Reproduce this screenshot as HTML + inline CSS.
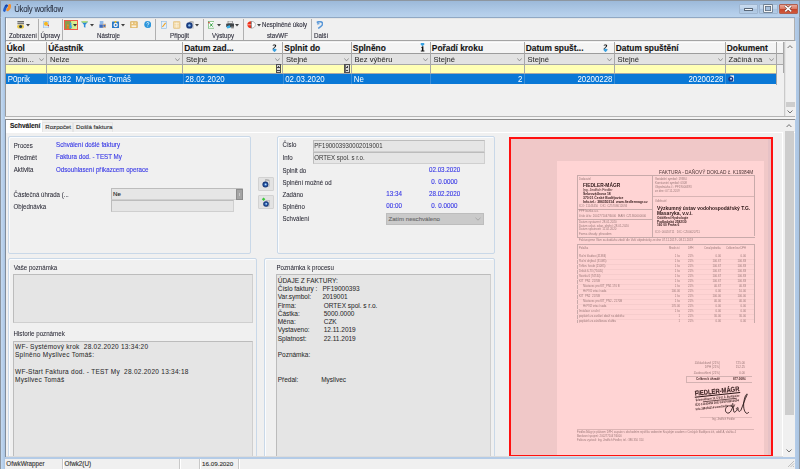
<!DOCTYPE html>
<html><head><meta charset="utf-8">
<style>
*{box-sizing:border-box;margin:0;padding:0}
html,body{width:800px;height:469px;overflow:hidden;background:#f0f0f0;font-family:"Liberation Sans",sans-serif;color:#222}
.a{position:absolute}
.t{position:absolute;white-space:pre;line-height:1;-webkit-text-stroke:0.12px currentColor}
</style></head><body>
<div class="a" style="left:0px;top:0px;width:800px;height:469px;background:#b9d1ea"></div>
<div class="a" style="left:0px;top:1px;width:800px;height:16.5px;background:linear-gradient(#9cb9d9,#b3cdea 70%,#bad3ec)"></div>
<div class="a" style="left:0px;top:17px;width:800px;height:1px;background:#94aac4"></div>
<div class="a" style="left:0px;top:0px;width:800px;height:1px;background:#8d96a0"></div>
<div class="a" style="left:0px;top:0px;width:1px;height:469px;background:#8d96a0"></div>
<div class="a" style="left:799px;top:0px;width:1px;height:469px;background:#8d96a0"></div>
<svg class="a" style="left:0px;top:0px" width="14" height="14" viewBox="0 0 14 14"><path d="M6.4 5.8 C5.6 7 4.8 8.6 4.4 10.6" stroke="#1f5cc8" stroke-width="2.6" stroke-linecap="round" fill="none"/><path d="M5.6 6 C6.2 5.4 6.8 5.2 7.2 5.6" stroke="#1a44a8" stroke-width="1.6" stroke-linecap="round" fill="none"/><path d="M9.6 5.4 C9.8 7.4 8.8 9 7.6 9.8" stroke="#f4902c" stroke-width="2.8" stroke-linecap="round" fill="none"/></svg>
<div class="t" style="left:14.2px;top:6.20px;font-size:7.8px;color:#283040;letter-spacing:-0.24px;transform:scaleY(1.08);-webkit-text-stroke:0.05px currentColor">Úkoly workflow</div>
<div class="a" style="left:739.2px;top:3.6px;width:18.8px;height:10.8px;border:0.8px solid #9fb6d0;border-radius:1px;background:linear-gradient(#c9dbef,#bcd2ea 50%,#a9c3e0 52%,#b4cce6)"></div>
<div class="a" style="left:744.4px;top:8.4px;width:8.4px;height:2.8px;background:#f8f8f8;border:0.7px solid #5a6878;border-radius:0.6px"></div>
<div class="a" style="left:759.2px;top:3.6px;width:18.8px;height:10.8px;border:0.8px solid #9fb6d0;border-radius:1px;background:linear-gradient(#c9dbef,#bcd2ea 50%,#a9c3e0 52%,#b4cce6)"></div>
<div class="a" style="left:764.4px;top:5.2px;width:8px;height:7.2px;border:1.4px solid #f4f4f4;box-shadow:0 0 0 0.7px #5a6878, inset 0 0 0 0.7px #5a6878;background:#a8c0dc"></div>
<div class="a" style="left:779.2px;top:3.6px;width:18.8px;height:10.8px;border:0.8px solid #b06050;border-radius:1px;background:linear-gradient(#eaa898,#dc7a64 48%,#c84428 52%,#d0583c)"></div>
<svg class="a" style="left:784px;top:5.2px" width="8.4" height="7.2" viewBox="0 0 8.4 7.2"><path d="M1.2 0.9 L7.2 6.3 M7.2 0.9 L1.2 6.3" stroke="#5a2a22" stroke-width="2.6"/><path d="M1.2 0.9 L7.2 6.3 M7.2 0.9 L1.2 6.3" stroke="#fafafa" stroke-width="1.7"/></svg>
<div class="a" style="left:5px;top:18px;width:790px;height:451px;background:#f0f0f0"></div>
<div class="a" style="left:0px;top:16.8px;width:800px;height:1.3px;background:#90a8c4"></div>
<div class="a" style="left:1px;top:17px;width:4px;height:452px;background:linear-gradient(90deg,#c4daf2,#a9c4e2)"></div>
<div class="a" style="left:795px;top:17px;width:4px;height:452px;background:linear-gradient(90deg,#b4cce8,#a9c4e2)"></div>
<div class="a" style="left:5px;top:17px;width:1px;height:441px;background:#808c9a"></div>
<div class="a" style="left:6px;top:18px;width:789px;height:22px;background:#f0f0f0;border-top:1px solid #e6e6e6;border-left:1px solid #fafafa"></div>
<div class="a" style="left:6px;top:40px;width:789px;height:1.7px;background:#a4a4a4"></div>
<div class="a" style="left:794.2px;top:17.5px;width:0.8px;height:22px;background:#b0b0b0"></div>
<div class="a" style="left:38px;top:19px;width:1px;height:21px;background:#b0b0b0"></div>
<div class="a" style="left:62px;top:19px;width:1px;height:21px;background:#b0b0b0"></div>
<div class="a" style="left:155px;top:19px;width:1px;height:21px;background:#b0b0b0"></div>
<div class="a" style="left:203px;top:19px;width:1px;height:21px;background:#b0b0b0"></div>
<div class="a" style="left:242.5px;top:19px;width:1px;height:21px;background:#b0b0b0"></div>
<div class="a" style="left:311px;top:19px;width:1px;height:21px;background:#b0b0b0"></div>
<div class="t" style="left:9px;top:32.60px;font-size:6.2px;color:#30303e;transform:scaleY(1.18)">Zobrazení</div>
<div class="t" style="left:40.5px;top:32.60px;font-size:6.2px;color:#30303e;transform:scaleY(1.18)">Úpravy</div>
<div class="t" style="left:97px;top:32.60px;font-size:6.2px;color:#30303e;transform:scaleY(1.18)">Nástroje</div>
<div class="t" style="left:170px;top:32.60px;font-size:6.2px;color:#30303e;transform:scaleY(1.18)">Připojit</div>
<div class="t" style="left:212px;top:32.60px;font-size:6.2px;color:#30303e;transform:scaleY(1.18)">Výstupy</div>
<div class="t" style="left:267px;top:32.60px;font-size:6.2px;color:#30303e;transform:scaleY(1.18)">stavWF</div>
<div class="t" style="left:314px;top:32.60px;font-size:6.2px;color:#30303e;transform:scaleY(1.18)">Další</div>
<div class="t" style="left:262px;top:22.35px;font-size:6.1px;color:#30303e;transform:scaleY(1.18)">Nesplněné úkoly</div>
<svg class="a" style="left:16.5px;top:20.8px" width="7.5" height="8" viewBox="0 0 7.5 8"><rect x="0.4" y="0" width="6.8" height="1.4" fill="#6a6a6a"/><rect x="0.4" y="1.9" width="6.8" height="1.4" fill="#7a7a7a"/><ellipse cx="3.6" cy="5.6" rx="3.6" ry="2.2" fill="#e8c84a"/><circle cx="3.6" cy="5.6" r="1.5" fill="#1f3a4a"/></svg>
<svg class="a" style="left:26px;top:24.3px" width="4" height="2.5" viewBox="0 0 4 2.5"><path d="M0 0 H4 L2 2.5Z" fill="#404040"/></svg>
<svg class="a" style="left:43px;top:21px" width="6.2" height="7.4" viewBox="0 0 6.2 7.4"><rect x="0.3" y="0.3" width="5.6" height="6.8" rx="0.6" fill="#d6e8f8" stroke="#7aaad8" stroke-width="0.6"/><circle cx="3" cy="2.8" r="2" fill="#f6b820"/><path d="M4 4 L5.9 3.8 L5.9 5.5Z" fill="#e04020"/></svg>
<div class="a" style="left:63.9px;top:20.2px;width:14px;height:9.7px;border:1px solid #f05848;background:linear-gradient(90deg,#8c9a4c 0,#8c9a4c 50%,#cfe884 51%,#dcf29a)"></div>
<svg class="a" style="left:65.5px;top:21.5px" width="7" height="7" viewBox="0 0 7 7"><circle cx="1.8" cy="3.2" r="1" fill="#e88a2a"/><path d="M0.6 6.8 L1 4.2 L2.6 4.2 L3 6.8Z" fill="#e87a1a"/><circle cx="4.6" cy="1.4" r="0.9" fill="#3aa0e8"/><path d="M3.4 6.2 L3.9 2.6 L5.4 2.6 L5.9 6.2Z" fill="#3aa0e8"/></svg>
<svg class="a" style="left:73.2px;top:24.2px" width="4" height="2.5" viewBox="0 0 4 2.5"><path d="M0 0 H4 L2 2.5Z" fill="#303030"/></svg>
<svg class="a" style="left:81px;top:21.4px" width="7.3" height="7" viewBox="0 0 7.3 7"><path d="M0.2 0.6 H7.1 L4.4 3.8 V6.8 L2.9 6 V3.8Z" fill="#2a8ad8"/><ellipse cx="3.65" cy="0.9" rx="3.4" ry="0.8" fill="#b8e070"/></svg>
<svg class="a" style="left:89.8px;top:24.3px" width="4" height="2.5" viewBox="0 0 4 2.5"><path d="M0 0 H4 L2 2.5Z" fill="#404040"/></svg>
<svg class="a" style="left:98.6px;top:21.4px" width="7.5" height="7" viewBox="0 0 7.5 7"><rect x="0.8" y="0" width="3.6" height="3" fill="#8fb8e8"/><path d="M0.4 3.4 H4.6 V6.8 H0.4Z" fill="#3c6cc0"/><rect x="3.8" y="2.8" width="3.6" height="4" fill="#d8b48a"/><circle cx="5.4" cy="4.8" r="1.1" fill="#3c6cc0"/></svg>
<svg class="a" style="left:112px;top:21px" width="7.3" height="7.3" viewBox="0 0 7.3 7.3"><rect x="0" y="0.6" width="7.3" height="6.7" rx="0.6" fill="#2a7ac8"/><circle cx="3.65" cy="4" r="2.2" fill="#f4f4f4"/><circle cx="3.65" cy="4" r="0.9" fill="#2a7ac8"/><path d="M2.4 0 L4.6 0 L4.2 1.8 L2.8 1.8Z" fill="#f4c020"/></svg>
<svg class="a" style="left:120.8px;top:24.3px" width="4" height="2.5" viewBox="0 0 4 2.5"><path d="M0 0 H4 L2 2.5Z" fill="#404040"/></svg>
<svg class="a" style="left:129.9px;top:20.8px" width="7.8" height="7.4" viewBox="0 0 7.8 7.4"><rect x="0.4" y="0.4" width="7" height="6.6" rx="0.8" fill="#e8c278" stroke="#d4a850" stroke-width="0.6"/><rect x="1.6" y="1.6" width="1.4" height="1.2" fill="#fff"/><rect x="4.6" y="1.6" width="1.4" height="1.2" fill="#f6e2b8"/><rect x="1.6" y="4.4" width="4.6" height="1.8" fill="#fbf0dc"/></svg>
<svg class="a" style="left:143.6px;top:21.4px" width="7.5" height="7.2" viewBox="0 0 7.5 7.2"><circle cx="3.75" cy="3.6" r="3.5" fill="#2c96dc"/><path d="M2.6 2.4 C2.8 1.2 4.8 1.2 4.8 2.4 C4.8 3.2 3.8 3.4 3.8 4.4" stroke="#fff" stroke-width="0.8" fill="none"/><circle cx="3.8" cy="5.6" r="0.45" fill="#fff"/></svg>
<svg class="a" style="left:161px;top:20.8px" width="5.8" height="7.8" viewBox="0 0 5.8 7.8"><rect x="0.3" y="0.3" width="5.2" height="7.2" fill="#e4f0fa" stroke="#8ab8e0" stroke-width="0.6"/><path d="M1.4 6 L4.6 1.8" stroke="#f0a020" stroke-width="1.1"/></svg>
<svg class="a" style="left:173.2px;top:20.8px" width="7.4" height="7.8" viewBox="0 0 7.4 7.8"><rect x="0.4" y="0.4" width="6.6" height="7" rx="0.8" fill="#f0d8a4" stroke="#e0b870" stroke-width="0.6"/><path d="M1.4 2.5 H6 M1.4 4.2 H6 M1.4 5.8 H6 M3.7 1.4 V6.8" stroke="#fff5e2" stroke-width="0.6"/></svg>
<svg class="a" style="left:186px;top:21px" width="8" height="7.6" viewBox="0 0 8 7.6"><rect x="3.2" y="0.8" width="4.6" height="6.8" fill="#c8c8c8"/><path d="M3.6 0.2 L7.6 1" stroke="#888" stroke-width="0.6"/><circle cx="3.4" cy="4.4" r="3.2" fill="#1a3c80"/><circle cx="3.4" cy="4.4" r="1.2" fill="#8cc0f0"/></svg>
<svg class="a" style="left:195.4px;top:24.3px" width="4" height="2.5" viewBox="0 0 4 2.5"><path d="M0 0 H4 L2 2.5Z" fill="#404040"/></svg>
<svg class="a" style="left:207.7px;top:21px" width="6.5" height="7.5" viewBox="0 0 6.5 7.5"><rect x="0.3" y="0.3" width="5.9" height="6.9" fill="#fff" stroke="#5cb060" stroke-width="0.7"/><path d="M2 2.4 L4.6 5.6 M4.6 2.4 L2 5.6" stroke="#2a9a3a" stroke-width="1"/><rect x="0.2" y="1.2" width="1.6" height="1" fill="#e02828"/></svg>
<svg class="a" style="left:216.9px;top:24.3px" width="4" height="2.5" viewBox="0 0 4 2.5"><path d="M0 0 H4 L2 2.5Z" fill="#404040"/></svg>
<svg class="a" style="left:225.7px;top:21px" width="8.3" height="7.5" viewBox="0 0 8.3 7.5"><rect x="2" y="0" width="4.5" height="2.5" fill="#e8e8e8" stroke="#555" stroke-width="0.5"/><rect x="0.2" y="2.4" width="8" height="3.8" rx="0.8" fill="#404448"/><path d="M0.6 5.6 L3.6 4 L4.6 6.8 L1.2 7.4Z" fill="#3ab0e8"/><rect x="5.2" y="5.4" width="2.6" height="2" fill="#888"/></svg>
<svg class="a" style="left:235px;top:24.3px" width="4" height="2.5" viewBox="0 0 4 2.5"><path d="M0 0 H4 L2 2.5Z" fill="#404040"/></svg>
<svg class="a" style="left:247.1px;top:21px" width="8.7" height="7.5" viewBox="0 0 8.7 7.5"><path d="M4.2 0.3 C1.8 0.3 0.3 1.8 0.3 3.75 C0.3 5.7 1.8 7.2 4.2 7.2Z" fill="#f03018"/><path d="M4.4 0.3 C6.8 0.3 8.4 1.8 8.4 3.75 C8.4 5.7 6.8 7.2 4.4 7.2Z" fill="#fff" stroke="#777" stroke-width="0.5"/><path d="M0.3 3.75 H8.4" stroke="#fff" stroke-width="0.6"/><path d="M4.3 0.3 V7.2" stroke="#555" stroke-width="0.5"/></svg>
<svg class="a" style="left:256.9px;top:24.3px" width="4" height="2.5" viewBox="0 0 4 2.5"><path d="M0 0 H4 L2 2.5Z" fill="#404040"/></svg>
<svg class="a" style="left:315.9px;top:21px" width="7.2" height="7.7" viewBox="0 0 7.2 7.7"><path d="M0.8 1.6 C3 0 6.4 0.4 6.6 2.6 C6.8 4.6 4.4 6.2 2.2 7.4" stroke="#5a98d8" stroke-width="1.6" fill="none"/><path d="M1 3 L3.4 2.6" stroke="#5a98d8" stroke-width="1.2"/></svg>
<div class="a" style="left:5.5px;top:41px;width:789.5px;height:78px;background:#f0f0f0"></div>
<div class="a" style="left:5.5px;top:41.7px;width:778px;height:11.6px;background:#f4f4f4;border-top:1px solid #fcfcfc"></div>
<div class="a" style="left:5.5px;top:53px;width:778px;height:1.5px;background:#9c9c9c"></div>
<div class="a" style="left:5.5px;top:54.3px;width:778px;height:10px;background:#e2e2e2"></div>
<div class="a" style="left:5.5px;top:63.6px;width:778px;height:1px;background:#a8a8a8"></div>
<div class="a" style="left:5.5px;top:64.6px;width:771px;height:9px;background:#ffffb4"></div>
<div class="a" style="left:776.5px;top:64.6px;width:7px;height:9px;background:#f0f0f0"></div>
<div class="a" style="left:5.5px;top:73.6px;width:771px;height:10.8px;background:#0a78d6"></div>
<div class="t" style="left:6.8px;top:44.10px;font-size:8.4px;font-weight:bold;color:#141414">Úkol</div>
<div class="t" style="left:8.5px;top:55.60px;font-size:7.6px;color:#2e2e2e;-webkit-text-stroke:0.05px currentColor;transform:scaleY(1.06)">Začín...</div>
<svg class="a" style="left:39.2px;top:57.7px" width="5" height="3.4" viewBox="0 0 5 3.4"><path d="M0.3 0.4 L2.5 2.9 L4.7 0.4" stroke="#808080" stroke-width="0.8" fill="none"/></svg>
<div class="t" style="left:48.3px;top:44.10px;font-size:8.4px;font-weight:bold;color:#141414">Účastník</div>
<div class="t" style="left:50.0px;top:55.60px;font-size:7.6px;color:#2e2e2e;-webkit-text-stroke:0.05px currentColor;transform:scaleY(1.06)">Nelze</div>
<svg class="a" style="left:175.2px;top:57.7px" width="5" height="3.4" viewBox="0 0 5 3.4"><path d="M0.3 0.4 L2.5 2.9 L4.7 0.4" stroke="#808080" stroke-width="0.8" fill="none"/></svg>
<div class="t" style="left:184.3px;top:44.10px;font-size:8.4px;font-weight:bold;color:#141414">Datum zad...</div>
<div class="t" style="left:186.0px;top:55.60px;font-size:7.6px;color:#2e2e2e;-webkit-text-stroke:0.05px currentColor;transform:scaleY(1.06)">Stejné</div>
<svg class="a" style="left:275.2px;top:57.7px" width="5" height="3.4" viewBox="0 0 5 3.4"><path d="M0.3 0.4 L2.5 2.9 L4.7 0.4" stroke="#808080" stroke-width="0.8" fill="none"/></svg>
<div class="t" style="left:284.3px;top:44.10px;font-size:8.4px;font-weight:bold;color:#141414">Splnit do</div>
<div class="t" style="left:286.0px;top:55.60px;font-size:7.6px;color:#2e2e2e;-webkit-text-stroke:0.05px currentColor;transform:scaleY(1.06)">Stejné</div>
<svg class="a" style="left:343.7px;top:57.7px" width="5" height="3.4" viewBox="0 0 5 3.4"><path d="M0.3 0.4 L2.5 2.9 L4.7 0.4" stroke="#808080" stroke-width="0.8" fill="none"/></svg>
<div class="t" style="left:352.8px;top:44.10px;font-size:8.4px;font-weight:bold;color:#141414">Splněno</div>
<div class="t" style="left:354.5px;top:55.60px;font-size:7.6px;color:#2e2e2e;-webkit-text-stroke:0.05px currentColor;transform:scaleY(1.06)">Bez výběru</div>
<svg class="a" style="left:422.7px;top:57.7px" width="5" height="3.4" viewBox="0 0 5 3.4"><path d="M0.3 0.4 L2.5 2.9 L4.7 0.4" stroke="#808080" stroke-width="0.8" fill="none"/></svg>
<div class="t" style="left:431.8px;top:44.10px;font-size:8.4px;font-weight:bold;color:#141414">Pořadí kroku</div>
<div class="t" style="left:433.5px;top:55.60px;font-size:7.6px;color:#2e2e2e;-webkit-text-stroke:0.05px currentColor;transform:scaleY(1.06)">Stejné</div>
<svg class="a" style="left:516.7px;top:57.7px" width="5" height="3.4" viewBox="0 0 5 3.4"><path d="M0.3 0.4 L2.5 2.9 L4.7 0.4" stroke="#808080" stroke-width="0.8" fill="none"/></svg>
<div class="t" style="left:525.8px;top:44.10px;font-size:8.4px;font-weight:bold;color:#141414">Datum spušt...</div>
<div class="t" style="left:527.5px;top:55.60px;font-size:7.6px;color:#2e2e2e;-webkit-text-stroke:0.05px currentColor;transform:scaleY(1.06)">Stejné</div>
<svg class="a" style="left:606.7px;top:57.7px" width="5" height="3.4" viewBox="0 0 5 3.4"><path d="M0.3 0.4 L2.5 2.9 L4.7 0.4" stroke="#808080" stroke-width="0.8" fill="none"/></svg>
<div class="t" style="left:615.8px;top:44.10px;font-size:8.4px;font-weight:bold;color:#141414">Datum spuštění</div>
<div class="t" style="left:617.5px;top:55.60px;font-size:7.6px;color:#2e2e2e;-webkit-text-stroke:0.05px currentColor;transform:scaleY(1.06)">Stejné</div>
<svg class="a" style="left:717.7px;top:57.7px" width="5" height="3.4" viewBox="0 0 5 3.4"><path d="M0.3 0.4 L2.5 2.9 L4.7 0.4" stroke="#808080" stroke-width="0.8" fill="none"/></svg>
<div class="t" style="left:726.8px;top:44.10px;font-size:8.4px;font-weight:bold;color:#141414">Dokument</div>
<div class="t" style="left:728.5px;top:55.60px;font-size:7.6px;color:#2e2e2e;-webkit-text-stroke:0.05px currentColor;transform:scaleY(1.06)">Začíná na</div>
<svg class="a" style="left:768.7px;top:57.7px" width="5" height="3.4" viewBox="0 0 5 3.4"><path d="M0.3 0.4 L2.5 2.9 L4.7 0.4" stroke="#808080" stroke-width="0.8" fill="none"/></svg>
<div class="a" style="left:46px;top:41.7px;width:1px;height:31.5px;background:#a8a8a8"></div>
<div class="a" style="left:182px;top:41.7px;width:1px;height:31.5px;background:#a8a8a8"></div>
<div class="a" style="left:282px;top:41.7px;width:1px;height:31.5px;background:#a8a8a8"></div>
<div class="a" style="left:351px;top:41.7px;width:1px;height:31.5px;background:#a8a8a8"></div>
<div class="a" style="left:430px;top:41.7px;width:1px;height:31.5px;background:#a8a8a8"></div>
<div class="a" style="left:524px;top:41.7px;width:1px;height:31.5px;background:#a8a8a8"></div>
<div class="a" style="left:614px;top:41.7px;width:1px;height:31.5px;background:#a8a8a8"></div>
<div class="a" style="left:725px;top:41.7px;width:1px;height:31.5px;background:#a8a8a8"></div>
<div class="a" style="left:776px;top:41.7px;width:1px;height:31.5px;background:#a8a8a8"></div>
<div class="a" style="left:783px;top:41.7px;width:1px;height:31.5px;background:#a8a8a8"></div>
<div class="a" style="left:46.5px;top:73.6px;width:1px;height:10.8px;background:#3c8ed8"></div>
<div class="a" style="left:182.5px;top:73.6px;width:1px;height:10.8px;background:#3c8ed8"></div>
<div class="a" style="left:282.5px;top:73.6px;width:1px;height:10.8px;background:#3c8ed8"></div>
<div class="a" style="left:351.0px;top:73.6px;width:1px;height:10.8px;background:#3c8ed8"></div>
<div class="a" style="left:430.0px;top:73.6px;width:1px;height:10.8px;background:#3c8ed8"></div>
<div class="a" style="left:524.0px;top:73.6px;width:1px;height:10.8px;background:#3c8ed8"></div>
<div class="a" style="left:614.0px;top:73.6px;width:1px;height:10.8px;background:#3c8ed8"></div>
<div class="a" style="left:725.0px;top:73.6px;width:1px;height:10.8px;background:#3c8ed8"></div>
<div class="a" style="left:775.5px;top:41.5px;width:1px;height:43px;background:#a8a8a8"></div>
<div class="a" style="left:5px;top:41.7px;width:1px;height:75.2px;background:#9a9a9a"></div>
<svg class="a" style="left:419.8px;top:42.6px" width="5" height="9" viewBox="0 0 5 9"><path d="M2.5 3.2 L0.6 1.4 A1.4 1.4 0 0 1 4.4 1.4Z" fill="#38a0e0"/><path d="M1.2 4.2 L2.6 3.2 H3.4 V7.6 H4.4 V8.4 H0.8 V7.6 H1.9 V4.6 L1.2 5Z" fill="#111"/></svg>
<svg class="a" style="left:271.5px;top:43.6px" width="5" height="8.4" viewBox="0 0 5 8.4"><path d="M0.6 1.2 C1.2 0.2 4.2 0.1 4.2 1.8 C4.2 3 2.6 3.6 1.4 5 H4.4 V5.6 H0.6 V4.8 C1.6 3.6 3 2.8 3 1.8 C3 0.9 1.6 1 1 1.8Z" fill="#111"/><path d="M2.5 8.2 L0.6 6.2 A1.5 1.3 0 0 1 4.4 6.2Z" fill="#38a0e0"/></svg>
<svg class="a" style="left:602.7px;top:43.6px" width="5" height="8.4" viewBox="0 0 5 8.4"><path d="M0.6 1.2 C1.2 0.2 4.2 0.1 4.2 1.8 C4.2 3 2.6 3.6 1.4 5 H4.4 V5.6 H0.6 V4.8 C1.6 3.6 3 2.8 3 1.8 C3 0.9 1.6 1 1 1.8Z" fill="#111"/><path d="M2.5 8.2 L0.6 6.2 A1.5 1.3 0 0 1 4.4 6.2Z" fill="#38a0e0"/></svg>
<div class="a" style="left:275.8px;top:64.2px;width:5.6px;height:8.6px;background:#6e6e6e;border:0.6px solid #505050"></div>
<div class="a" style="left:277.0px;top:65.3px;width:3.2px;height:6.4px;background:#d8d8d8"></div>
<div class="a" style="left:277.40000000000003px;top:67px;width:2.4px;height:0.6px;background:#444"></div>
<div class="a" style="left:278.3px;top:66.1px;width:0.6px;height:2.4px;background:#444"></div>
<div class="a" style="left:277.40000000000003px;top:70.1px;width:2.4px;height:0.6px;background:#444"></div>
<div class="a" style="left:344.3px;top:64.2px;width:5.6px;height:8.6px;background:#6e6e6e;border:0.6px solid #505050"></div>
<div class="a" style="left:345.5px;top:65.3px;width:3.2px;height:6.4px;background:#d8d8d8"></div>
<div class="a" style="left:345.90000000000003px;top:67px;width:2.4px;height:0.6px;background:#444"></div>
<div class="a" style="left:346.8px;top:66.1px;width:0.6px;height:2.4px;background:#444"></div>
<div class="a" style="left:345.90000000000003px;top:70.1px;width:2.4px;height:0.6px;background:#444"></div>
<div class="a" style="left:5.5px;top:72.8px;width:771px;height:0.8px;background:#a8a8a8"></div>
<svg class="a" style="left:727.6px;top:75.3px" width="6.6" height="6.8" viewBox="0 0 6.6 6.8"><rect x="2.6" y="0.3" width="3.8" height="6" fill="#e8eef8" stroke="#9ab" stroke-width="0.4"/><circle cx="2.8" cy="4" r="2.6" fill="#1a3a8a"/><circle cx="3" cy="3.8" r="1" fill="#c8e0ff"/></svg>
<div class="t" style="left:7.7px;top:75.65px;font-size:7.9px;color:#fff;-webkit-text-stroke:0;transform:scaleY(1.06)">P0prik</div>
<div class="t" style="left:49.2px;top:75.65px;font-size:7.9px;color:#fff;-webkit-text-stroke:0;transform:scaleY(1.06)">99182  Myslivec Tomáš</div>
<div class="t" style="left:185.2px;top:75.65px;font-size:7.9px;color:#fff;-webkit-text-stroke:0;transform:scaleY(1.06)">28.02.2020</div>
<div class="t" style="left:285.2px;top:75.65px;font-size:7.9px;color:#fff;-webkit-text-stroke:0;transform:scaleY(1.06)">02.03.2020</div>
<div class="t" style="left:353.7px;top:75.65px;font-size:7.9px;color:#fff;-webkit-text-stroke:0;transform:scaleY(1.06)">Ne</div>
<div class="t" style="left:430.5px;width:92.0px;text-align:right;top:75.65px;font-size:7.9px;color:#fff;-webkit-text-stroke:0;transform:scaleY(1.06)">2</div>
<div class="t" style="left:524.5px;width:88.0px;text-align:right;top:75.65px;font-size:7.9px;color:#fff;-webkit-text-stroke:0;transform:scaleY(1.06)">20200228</div>
<div class="t" style="left:614.5px;width:109.0px;text-align:right;top:75.65px;font-size:7.9px;color:#fff;-webkit-text-stroke:0;transform:scaleY(1.06)">20200228</div>
<div class="a" style="left:784.5px;top:41px;width:11px;height:78px;background:#f0f0f0;border-left:1px solid #e6e6e6"></div>
<div class="a" style="left:785.5px;top:101.5px;width:9.5px;height:5px;background:#cdcdcd"></div>
<svg class="a" style="left:787px;top:44.8px" width="6" height="3.6" viewBox="0 0 6 3.6"><path d="M0.5 3.1 L3 0.6 L5.5 3.1" stroke="#606060" stroke-width="0.9" fill="none"/></svg>
<svg class="a" style="left:787px;top:110.4px" width="6" height="3.6" viewBox="0 0 6 3.6"><path d="M0.5 0.5 L3 3 L5.5 0.5" stroke="#606060" stroke-width="0.9" fill="none"/></svg>
<div class="a" style="left:784px;top:41.7px;width:1px;height:75px;background:#cacaca"></div>
<div class="a" style="left:5px;top:116px;width:790px;height:1px;background:#b4b4b4"></div>
<div class="a" style="left:5px;top:117px;width:790px;height:2px;background:#f4f4f4"></div>
<div class="a" style="left:5px;top:119px;width:790px;height:1px;background:#8c8c8c"></div>
<div class="a" style="left:6px;top:119.8px;width:789px;height:338px;background:#f0f0f0"></div>
<div class="a" style="left:6px;top:120px;width:36px;height:13px;background:#fff"></div>
<div class="a" style="left:42px;top:121.5px;width:30.5px;height:10.5px;background:#f0f0f0;border:1px solid #e4e4e4;border-bottom:none"></div>
<div class="a" style="left:72.5px;top:121.5px;width:40.5px;height:10.5px;background:#f0f0f0;border:1px solid #e4e4e4;border-bottom:none"></div>
<div class="t" style="left:10px;top:123.15px;font-size:6.5px;font-weight:bold;color:#1a1a1a">Schválení</div>
<div class="t" style="left:45.3px;top:123.55px;font-size:6.1px;color:#333">Rozpočet</div>
<div class="t" style="left:76px;top:123.50px;font-size:6.2px;color:#333">Došlá faktura</div>
<div class="a" style="left:6px;top:132px;width:789px;height:1.2px;background:#fff"></div>
<div class="a" style="left:8px;top:136px;width:243px;height:118px;border:1px solid #c9d8e8;border-radius:2px;box-shadow:inset 1px 1px 0 #fafcfe"></div>
<div class="t" style="left:13.8px;top:142.65px;font-size:6.1px;color:#2a2a36;transform:scaleY(1.12);-webkit-text-stroke:0.05px currentColor">Proces</div>
<div class="t" style="left:56px;top:142.10px;font-size:6.2px;color:#3c3ce6;transform:scaleY(1.1)">Schválení došlé faktury</div>
<div class="t" style="left:13.8px;top:154.55px;font-size:6.1px;color:#2a2a36;transform:scaleY(1.12);-webkit-text-stroke:0.05px currentColor">Předmět</div>
<div class="t" style="left:56px;top:154.20px;font-size:6.2px;color:#3c3ce6;transform:scaleY(1.1)">Faktura dod. - TEST My</div>
<div class="t" style="left:13.8px;top:166.95px;font-size:6.1px;color:#2a2a36;transform:scaleY(1.12);-webkit-text-stroke:0.05px currentColor">Aktivita</div>
<div class="t" style="left:56px;top:166.50px;font-size:6.2px;color:#3c3ce6;transform:scaleY(1.1)">Odsouhlasení příkazcem operace</div>
<div class="t" style="left:13.6px;top:191.95px;font-size:6.1px;color:#2a2a36;transform:scaleY(1.12);-webkit-text-stroke:0.05px currentColor">Částečná úhrada (...</div>
<div class="t" style="left:13.6px;top:203.75px;font-size:6.1px;color:#2a2a36;transform:scaleY(1.12);-webkit-text-stroke:0.05px currentColor">Objednávka</div>
<div class="a" style="left:111px;top:188px;width:132px;height:12px;background:#e6e6e6;border:1px solid #cfcfcf;border-top-color:#bcbcbc;border-left-color:#bcbcbc"></div>
<div class="a" style="left:235.8px;top:188.6px;width:7.4px;height:11px;background:#a4a4a4;border:1px solid #8c8c8c"></div>
<div class="a" style="left:238.6px;top:192.6px;width:1.6px;height:3px;background:#c8c8c8"></div>
<div class="t" style="left:113px;top:190.95px;font-size:6.1px;color:#222">Ne</div>
<div class="a" style="left:111px;top:200px;width:123px;height:12px;background:#e5e5e5;border:1px solid #cfcfcf;border-top-color:#bcbcbc;border-left-color:#bcbcbc"></div>
<div class="a" style="left:258px;top:176.8px;width:16px;height:14.6px;background:#e3e3e3;border:1px solid #d2d2d2;border-radius:1px"></div>
<div class="a" style="left:258px;top:194.9px;width:16px;height:14.6px;background:#e3e3e3;border:1px solid #d2d2d2;border-radius:1px"></div>
<svg class="a" style="left:261px;top:179px" width="10" height="10" viewBox="0 0 10 10"><rect x="4.6" y="1" width="3.6" height="6.6" fill="#dcdcdc" stroke="#9a9a9a" stroke-width="0.4"/><path d="M4.4 0.6 L8 1.4" stroke="#777" stroke-width="0.5"/><circle cx="4.4" cy="5.6" r="3" fill="#1a3878"/><circle cx="4.4" cy="5.6" r="1.9" fill="#2a60b0"/><circle cx="4.6" cy="5.4" r="0.9" fill="#bfe0ff"/></svg>
<svg class="a" style="left:261px;top:197px" width="10" height="11" viewBox="0 0 10 11"><rect x="5" y="3.4" width="3.4" height="6" fill="#d8d8d8" stroke="#9a9a9a" stroke-width="0.4"/><path d="M2.6 0.4 L4.4 2.2 L2.6 4 L0.8 2.2Z" fill="#3cc83c"/><circle cx="5" cy="7" r="2.8" fill="#1a3878"/><circle cx="5" cy="7" r="1.8" fill="#2a60b0"/><circle cx="5.2" cy="6.8" r="0.85" fill="#bfe0ff"/></svg>
<div class="a" style="left:277px;top:136px;width:218px;height:118px;border:1px solid #c9d8e8;border-radius:2px;box-shadow:inset 1px 1px 0 #fafcfe"></div>
<div class="t" style="left:282.5px;top:142.45px;font-size:6.1px;color:#2a2a36;transform:scaleY(1.12);-webkit-text-stroke:0.05px currentColor">Číslo</div>
<div class="t" style="left:282.5px;top:154.75px;font-size:6.1px;color:#2a2a36;transform:scaleY(1.12);-webkit-text-stroke:0.05px currentColor">Info</div>
<div class="t" style="left:282.5px;top:167.65px;font-size:6.1px;color:#2a2a36;transform:scaleY(1.12);-webkit-text-stroke:0.05px currentColor">Splnit do</div>
<div class="t" style="left:282.5px;top:179.75px;font-size:6.1px;color:#2a2a36;transform:scaleY(1.12);-webkit-text-stroke:0.05px currentColor">Splnění možné od</div>
<div class="t" style="left:282.5px;top:191.75px;font-size:6.1px;color:#2a2a36;transform:scaleY(1.12);-webkit-text-stroke:0.05px currentColor">Zadáno</div>
<div class="t" style="left:282.5px;top:203.75px;font-size:6.1px;color:#2a2a36;transform:scaleY(1.12);-webkit-text-stroke:0.05px currentColor">Splněno</div>
<div class="t" style="left:282.5px;top:215.55px;font-size:6.1px;color:#2a2a36;transform:scaleY(1.12);-webkit-text-stroke:0.05px currentColor">Schválení</div>
<div class="a" style="left:313px;top:139.5px;width:172px;height:12px;background:#e5e5e5;border:1px solid #cfcfcf;border-top-color:#bcbcbc;border-left-color:#bcbcbc"></div>
<div class="a" style="left:313px;top:151.5px;width:172px;height:12px;background:#e5e5e5;border:1px solid #cfcfcf;border-top-color:#bcbcbc;border-left-color:#bcbcbc"></div>
<div class="t" style="left:314.3px;top:142.67px;font-size:6.05px;color:#333;-webkit-text-stroke:0;transform:scaleY(1.1)">PF190003930002019001</div>
<div class="t" style="left:314.3px;top:154.75px;font-size:6.1px;color:#333;-webkit-text-stroke:0;transform:scaleY(1.1)">ORTEX spol. s r.o.</div>
<div class="t" style="left:404.6px;width:80px;text-align:center;top:166.68px;font-size:6.25px;color:#3c3ce6;transform:scaleY(1.1)">02.03.2020</div>
<div class="t" style="left:404.4px;width:80px;text-align:center;top:178.97px;font-size:6.25px;color:#3c3ce6;transform:scaleY(1.1)">0. 0.0000</div>
<div class="t" style="left:354.2px;width:80px;text-align:center;top:191.07px;font-size:6.25px;color:#3c3ce6;transform:scaleY(1.1)">13:34</div>
<div class="t" style="left:404.6px;width:80px;text-align:center;top:191.07px;font-size:6.25px;color:#3c3ce6;transform:scaleY(1.1)">28.02.2020</div>
<div class="t" style="left:354.2px;width:80px;text-align:center;top:203.07px;font-size:6.25px;color:#3c3ce6;transform:scaleY(1.1)">00:00</div>
<div class="t" style="left:404.4px;width:80px;text-align:center;top:203.07px;font-size:6.25px;color:#3c3ce6;transform:scaleY(1.1)">0. 0.0000</div>
<div class="a" style="left:386px;top:213px;width:98.3px;height:11.8px;background:#cacaca;border:1px solid #bdbdbd"></div>
<div class="t" style="left:388.5px;top:215.85px;font-size:6.1px;color:#6a6a6a">Zatím neschváleno</div>
<svg class="a" style="left:475px;top:217px" width="6" height="4" viewBox="0 0 6 4"><path d="M0.5 0.8 L3 3.2 L5.5 0.8" stroke="#9a9a9a" stroke-width="0.7" fill="none"/></svg>
<div class="a" style="left:8px;top:258px;width:249px;height:210px;border:1px solid #c9d8e8;border-radius:2px;box-shadow:inset 1px 1px 0 #fafcfe"></div>
<div class="t" style="left:13.7px;top:264.73px;font-size:6.15px;color:#2a2a36;transform:scaleY(1.12);-webkit-text-stroke:0.05px currentColor">Vaše poznámka</div>
<div class="a" style="left:13px;top:274px;width:240px;height:49px;background:#e5e5e5;border:1px solid #cfcfcf;border-top-color:#bcbcbc;border-left-color:#bcbcbc"></div>
<div class="t" style="left:13.5px;top:331.30px;font-size:6.2px;color:#2a2a36;transform:scaleY(1.12);-webkit-text-stroke:0.05px currentColor">Historie poznámek</div>
<div class="a" style="left:13px;top:341px;width:240px;height:130px;background:#e5e5e5;border:1px solid #cfcfcf;border-top-color:#bcbcbc;border-left-color:#bcbcbc"></div>
<div class="t" style="left:15px;top:343.95px;font-size:6.5px;color:#2a2a2a;letter-spacing:0.26px;-webkit-text-stroke:0.04px currentColor">WF- Systémový krok  28.02.2020 13:34:20</div>
<div class="t" style="left:15px;top:352.35px;font-size:6.5px;color:#2a2a2a;letter-spacing:0.26px;-webkit-text-stroke:0.04px currentColor">Splněno Myslivec Tomáš:</div>
<div class="t" style="left:15px;top:368.75px;font-size:6.5px;color:#2a2a2a;letter-spacing:0.26px;-webkit-text-stroke:0.04px currentColor">WF-Start Faktura dod. - TEST My  28.02.2020 13:34:18</div>
<div class="t" style="left:15px;top:377.15px;font-size:6.5px;color:#2a2a2a;letter-spacing:0.26px;-webkit-text-stroke:0.04px currentColor">Myslivec Tomáš</div>
<div class="a" style="left:264px;top:258px;width:231px;height:210px;border:1px solid #c9d8e8;border-radius:2px;box-shadow:inset 1px 1px 0 #fafcfe"></div>
<div class="t" style="left:276.5px;top:264.53px;font-size:6.15px;color:#2a2a36;transform:scaleY(1.12);-webkit-text-stroke:0.05px currentColor">Poznámka k procesu</div>
<div class="a" style="left:276px;top:274px;width:215px;height:200px;background:#e5e5e5;border:1px solid #cfcfcf;border-top-color:#bcbcbc;border-left-color:#bcbcbc"></div>
<div class="t" style="left:277.7px;top:277.85px;font-size:6.5px;color:#2a2a2a;-webkit-text-stroke:0.04px currentColor">ÚDAJE Z FAKTURY:</div>
<div class="t" style="left:277.7px;top:286.05px;font-size:6.5px;color:#2a2a2a;-webkit-text-stroke:0.04px currentColor">Číslo faktury :</div>
<div class="t" style="left:322.4px;top:286.05px;font-size:6.5px;color:#2a2a2a;-webkit-text-stroke:0.04px currentColor">PF19000393</div>
<div class="t" style="left:277.7px;top:293.95px;font-size:6.5px;color:#2a2a2a;-webkit-text-stroke:0.04px currentColor">Var.symbol:</div>
<div class="t" style="left:322.4px;top:293.95px;font-size:6.5px;color:#2a2a2a;-webkit-text-stroke:0.04px currentColor">2019001</div>
<div class="t" style="left:277.7px;top:302.65px;font-size:6.5px;color:#2a2a2a;-webkit-text-stroke:0.04px currentColor">Firma:</div>
<div class="t" style="left:323.7px;top:302.65px;font-size:6.5px;color:#2a2a2a;-webkit-text-stroke:0.04px currentColor">ORTEX spol. s r.o.</div>
<div class="t" style="left:277.7px;top:310.65px;font-size:6.5px;color:#2a2a2a;-webkit-text-stroke:0.04px currentColor">Částka:</div>
<div class="t" style="left:323.7px;top:310.65px;font-size:6.5px;color:#2a2a2a;-webkit-text-stroke:0.04px currentColor">5000.0000</div>
<div class="t" style="left:277.7px;top:319.05px;font-size:6.5px;color:#2a2a2a;-webkit-text-stroke:0.04px currentColor">Měna:</div>
<div class="t" style="left:323.7px;top:319.05px;font-size:6.5px;color:#2a2a2a;-webkit-text-stroke:0.04px currentColor">CZK</div>
<div class="t" style="left:277.7px;top:327.45px;font-size:6.5px;color:#2a2a2a;-webkit-text-stroke:0.04px currentColor">Vystaveno:</div>
<div class="t" style="left:323.7px;top:327.45px;font-size:6.5px;color:#2a2a2a;-webkit-text-stroke:0.04px currentColor">12.11.2019</div>
<div class="t" style="left:277.7px;top:335.65px;font-size:6.5px;color:#2a2a2a;-webkit-text-stroke:0.04px currentColor">Splatnost:</div>
<div class="t" style="left:323.7px;top:335.65px;font-size:6.5px;color:#2a2a2a;-webkit-text-stroke:0.04px currentColor">22.11.2019</div>
<div class="t" style="left:277.7px;top:352.05px;font-size:6.5px;color:#2a2a2a;-webkit-text-stroke:0.04px currentColor">Poznámka:</div>
<div class="t" style="left:277.7px;top:377.15px;font-size:6.5px;color:#2a2a2a;-webkit-text-stroke:0.04px currentColor">Předal:</div>
<div class="t" style="left:321.2px;top:377.15px;font-size:6.5px;color:#2a2a2a;-webkit-text-stroke:0.04px currentColor">Myslivec</div>
<div class="a" style="left:509.3px;top:137.4px;width:263.3px;height:319.4px;background:#f0c8c8;border:2px solid #ff1010"></div>
<div class="a" style="left:557.2px;top:160.8px;width:207.2px;height:294px;background:#ffd4d4"></div>
<div class="a" style="left:768px;top:139.4px;width:2.8px;height:315.4px;background:#e6c2c6"></div>
<div class="a" style="left:0;top:0;width:800px;height:469px;filter:blur(0.22px)">
<div class="t" style="left:658.6px;top:169.80px;font-size:14.40px;transform:scale(0.3333);transform-origin:0 0;-webkit-text-stroke:0;color:#4a3434">FAKTURA - DAŇOVÝ DOKLAD č. K19384M</div>
<div class="a" style="left:576.7px;top:175.4px;width:178px;height:0.6px;background:#c8aaaa"></div>
<div class="a" style="left:576.7px;top:175.4px;width:0.6px;height:61.6px;background:#c8aaaa"></div>
<div class="a" style="left:754.4px;top:175.4px;width:0.6px;height:61px;background:#c8aaaa"></div>
<div class="a" style="left:652px;top:175.4px;width:0.6px;height:61.6px;background:#c8aaaa"></div>
<div class="a" style="left:576.7px;top:208.9px;width:75.3px;height:0.6px;background:#c8aaaa"></div>
<div class="a" style="left:576.7px;top:218.9px;width:75.3px;height:0.6px;background:#c8aaaa"></div>
<div class="a" style="left:576.7px;top:236.6px;width:178.3px;height:0.6px;background:#c8aaaa"></div>
<div class="a" style="left:653px;top:196px;width:101.4px;height:0.6px;background:#d8b4b4"></div>
<div class="t" style="left:579px;top:178.30px;font-size:7.80px;transform:scale(0.3333);transform-origin:0 0;-webkit-text-stroke:0;color:#9a7a7a">Dodavatel</div>
<div class="t" style="left:583px;top:182.97px;font-size:14.55px;transform:scale(0.3333);transform-origin:0 0;-webkit-text-stroke:0;color:#2a1414;font-weight:bold">FIEDLER-MÁGR</div>
<div class="t" style="left:583px;top:188.10px;font-size:10.20px;transform:scale(0.3333);transform-origin:0 0;-webkit-text-stroke:0;color:#3a2020">Ing. Jindřich Fiedler</div>
<div class="t" style="left:583px;top:192.10px;font-size:10.20px;transform:scale(0.3333);transform-origin:0 0;-webkit-text-stroke:0;color:#3a2020;font-weight:bold">Šebrováčkova 18</div>
<div class="t" style="left:583px;top:196.00px;font-size:10.20px;transform:scale(0.3333);transform-origin:0 0;-webkit-text-stroke:0;color:#3a2020;font-weight:bold">370 01 České Budějovice</div>
<div class="t" style="left:583px;top:200.10px;font-size:10.20px;transform:scale(0.3333);transform-origin:0 0;-webkit-text-stroke:0;color:#3a2020;font-weight:bold">Info.tel.: 386350314  www.fiedlermagr.cz</div>
<div class="t" style="left:579px;top:204.75px;font-size:8.70px;transform:scale(0.3333);transform-origin:0 0;-webkit-text-stroke:0;color:#9a7a7a">IČO: 11143450   DIČ: CZ5708012694</div>
<div class="t" style="left:579px;top:210.35px;font-size:8.70px;transform:scale(0.3333);transform-origin:0 0;-webkit-text-stroke:0;color:#9a7a7a">PPF banka a.s.</div>
<div class="t" style="left:579px;top:214.75px;font-size:8.70px;transform:scale(0.3333);transform-origin:0 0;-webkit-text-stroke:0;color:#9a7a7a">číslo účtu: 2002771047/6000  IBAN: CZ1360000000</div>
<div class="t" style="left:579px;top:220.55px;font-size:8.70px;transform:scale(0.3333);transform-origin:0 0;-webkit-text-stroke:0;color:#9a7a7a">Datum vystavení: 28.01.2020</div>
<div class="t" style="left:579px;top:224.55px;font-size:8.70px;transform:scale(0.3333);transform-origin:0 0;-webkit-text-stroke:0;color:#9a7a7a">Datum uskut. zdan. plnění: 28.01.2020</div>
<div class="t" style="left:579px;top:228.35px;font-size:8.70px;transform:scale(0.3333);transform-origin:0 0;-webkit-text-stroke:0;color:#9a7a7a">Datum splatnosti: 11.02.2020</div>
<div class="t" style="left:579px;top:232.55px;font-size:8.70px;transform:scale(0.3333);transform-origin:0 0;-webkit-text-stroke:0;color:#9a7a7a">Forma úhrady: převodem</div>
<div class="t" style="left:655px;top:177.85px;font-size:8.70px;transform:scale(0.3333);transform-origin:0 0;-webkit-text-stroke:0;color:#9a7a7a">Variabilní symbol: 19384</div>
<div class="t" style="left:655px;top:182.05px;font-size:8.70px;transform:scale(0.3333);transform-origin:0 0;-webkit-text-stroke:0;color:#9a7a7a">Konstantní symbol: 0308</div>
<div class="t" style="left:655px;top:185.95px;font-size:8.70px;transform:scale(0.3333);transform-origin:0 0;-webkit-text-stroke:0;color:#9a7a7a">Objednávka č.: PF19000393</div>
<div class="t" style="left:655px;top:189.85px;font-size:8.70px;transform:scale(0.3333);transform-origin:0 0;-webkit-text-stroke:0;color:#9a7a7a">ze dne: 07.11.2019</div>
<div class="t" style="left:655px;top:200.00px;font-size:7.80px;transform:scale(0.3333);transform-origin:0 0;-webkit-text-stroke:0;color:#9a7a7a">Odběratel</div>
<div class="t" style="left:657px;top:205.93px;font-size:14.85px;transform:scale(0.3333);transform-origin:0 0;-webkit-text-stroke:0;color:#2a1414;font-weight:bold">Výzkumný ústav vodohospodářský T.G.</div>
<div class="t" style="left:657px;top:210.93px;font-size:14.85px;transform:scale(0.3333);transform-origin:0 0;-webkit-text-stroke:0;color:#2a1414;font-weight:bold">Masaryka, v.v.i.</div>
<div class="t" style="left:657px;top:215.70px;font-size:9.60px;transform:scale(0.3333);transform-origin:0 0;-webkit-text-stroke:0;color:#3a2020;font-weight:bold">Oddělení Hydrologie</div>
<div class="t" style="left:657px;top:219.50px;font-size:9.60px;transform:scale(0.3333);transform-origin:0 0;-webkit-text-stroke:0;color:#3a2020;font-weight:bold">Podbabská 2582/30</div>
<div class="t" style="left:657px;top:223.40px;font-size:9.60px;transform:scale(0.3333);transform-origin:0 0;-webkit-text-stroke:0;color:#3a2020;font-weight:bold">160 00 Praha 6</div>
<div class="t" style="left:655px;top:231.35px;font-size:8.70px;transform:scale(0.3333);transform-origin:0 0;-webkit-text-stroke:0;color:#9a7a7a">IČO: 00020711   DIČ: CZ00020711</div>
<div class="t" style="left:579px;top:238.95px;font-size:8.70px;transform:scale(0.3333);transform-origin:0 0;-webkit-text-stroke:0;color:#9a7a7a">Fakturujeme Vám za dodávku zboží dle Vaší objednávky ze dne 07.11.2019 - 08.11.2019</div>
<div class="a" style="left:576.7px;top:244.2px;width:177.7px;height:0.5px;background:#c8aaaa"></div>
<div class="a" style="left:576.7px;top:244.2px;width:0.5px;height:78.4px;background:#c8aaaa"></div>
<div class="a" style="left:754.2px;top:244.2px;width:0.5px;height:78.4px;background:#c8aaaa"></div>
<div class="t" style="left:579px;top:247.00px;font-size:7.80px;transform:scale(0.3333);transform-origin:0 0;-webkit-text-stroke:0;color:#9a7a7a">Položka</div>
<div class="t" style="left:669px;top:247.00px;font-size:7.80px;transform:scale(0.3333);transform-origin:0 0;-webkit-text-stroke:0;color:#9a7a7a">Množství</div>
<div class="t" style="left:688px;top:247.00px;font-size:7.80px;transform:scale(0.3333);transform-origin:0 0;-webkit-text-stroke:0;color:#9a7a7a">DPH</div>
<div class="t" style="left:704px;top:247.00px;font-size:7.80px;transform:scale(0.3333);transform-origin:0 0;-webkit-text-stroke:0;color:#9a7a7a">Cena/jednotka</div>
<div class="t" style="left:726px;top:247.00px;font-size:7.80px;transform:scale(0.3333);transform-origin:0 0;-webkit-text-stroke:0;color:#9a7a7a">Celkem bez DPH</div>
<div class="t" style="left:579px;top:255.30px;font-size:8.40px;transform:scale(0.3333);transform-origin:0 0;-webkit-text-stroke:0;color:#9a7878">Ruční kladivo (41384)</div>
<div class="t" style="left:650px;top:255.30px;width:90px;text-align:right;font-size:8.40px;transform:scale(0.3333);transform-origin:0 0;-webkit-text-stroke:0;color:#9a7878">1 ks</div>
<div class="t" style="left:688px;top:255.30px;font-size:8.40px;transform:scale(0.3333);transform-origin:0 0;-webkit-text-stroke:0;color:#9a7878">21%</div>
<div class="t" style="left:690.7px;top:255.30px;width:90px;text-align:right;font-size:8.40px;transform:scale(0.3333);transform-origin:0 0;-webkit-text-stroke:0;color:#9a7878">0.00</div>
<div class="t" style="left:715.6px;top:255.30px;width:90px;text-align:right;font-size:8.40px;transform:scale(0.3333);transform-origin:0 0;-webkit-text-stroke:0;color:#9a7878">0.00</div>
<div class="a" style="left:577px;top:259.2px;width:177px;height:0.4px;background:#f6cccc"></div>
<div class="t" style="left:579px;top:260.27px;font-size:8.40px;transform:scale(0.3333);transform-origin:0 0;-webkit-text-stroke:0;color:#9a7878">Ruční ohýbač (31085)</div>
<div class="t" style="left:650px;top:260.27px;width:90px;text-align:right;font-size:8.40px;transform:scale(0.3333);transform-origin:0 0;-webkit-text-stroke:0;color:#9a7878">1 ks</div>
<div class="t" style="left:688px;top:260.27px;font-size:8.40px;transform:scale(0.3333);transform-origin:0 0;-webkit-text-stroke:0;color:#9a7878">21%</div>
<div class="t" style="left:690.7px;top:260.27px;width:90px;text-align:right;font-size:8.40px;transform:scale(0.3333);transform-origin:0 0;-webkit-text-stroke:0;color:#9a7878">100.67</div>
<div class="t" style="left:715.6px;top:260.27px;width:90px;text-align:right;font-size:8.40px;transform:scale(0.3333);transform-origin:0 0;-webkit-text-stroke:0;color:#9a7878">100.83</div>
<div class="a" style="left:577px;top:264.17px;width:177px;height:0.4px;background:#f6cccc"></div>
<div class="t" style="left:579px;top:265.24px;font-size:8.40px;transform:scale(0.3333);transform-origin:0 0;-webkit-text-stroke:0;color:#9a7878">Teflon. šroub (21085)</div>
<div class="t" style="left:650px;top:265.24px;width:90px;text-align:right;font-size:8.40px;transform:scale(0.3333);transform-origin:0 0;-webkit-text-stroke:0;color:#9a7878">1 ks</div>
<div class="t" style="left:688px;top:265.24px;font-size:8.40px;transform:scale(0.3333);transform-origin:0 0;-webkit-text-stroke:0;color:#9a7878">21%</div>
<div class="t" style="left:690.7px;top:265.24px;width:90px;text-align:right;font-size:8.40px;transform:scale(0.3333);transform-origin:0 0;-webkit-text-stroke:0;color:#9a7878">100.67</div>
<div class="t" style="left:715.6px;top:265.24px;width:90px;text-align:right;font-size:8.40px;transform:scale(0.3333);transform-origin:0 0;-webkit-text-stroke:0;color:#9a7878">100.83</div>
<div class="a" style="left:577px;top:269.14px;width:177px;height:0.4px;background:#f6cccc"></div>
<div class="t" style="left:579px;top:270.21px;font-size:8.40px;transform:scale(0.3333);transform-origin:0 0;-webkit-text-stroke:0;color:#9a7878">Držák 6-73 (71045)</div>
<div class="t" style="left:650px;top:270.21px;width:90px;text-align:right;font-size:8.40px;transform:scale(0.3333);transform-origin:0 0;-webkit-text-stroke:0;color:#9a7878">1 ks</div>
<div class="t" style="left:688px;top:270.21px;font-size:8.40px;transform:scale(0.3333);transform-origin:0 0;-webkit-text-stroke:0;color:#9a7878">21%</div>
<div class="t" style="left:690.7px;top:270.21px;width:90px;text-align:right;font-size:8.40px;transform:scale(0.3333);transform-origin:0 0;-webkit-text-stroke:0;color:#9a7878">100.67</div>
<div class="t" style="left:715.6px;top:270.21px;width:90px;text-align:right;font-size:8.40px;transform:scale(0.3333);transform-origin:0 0;-webkit-text-stroke:0;color:#9a7878">100.83</div>
<div class="a" style="left:577px;top:274.11px;width:177px;height:0.4px;background:#f6cccc"></div>
<div class="t" style="left:579px;top:275.18px;font-size:8.40px;transform:scale(0.3333);transform-origin:0 0;-webkit-text-stroke:0;color:#9a7878">Svorka 6 (74744)</div>
<div class="t" style="left:650px;top:275.18px;width:90px;text-align:right;font-size:8.40px;transform:scale(0.3333);transform-origin:0 0;-webkit-text-stroke:0;color:#9a7878">1 ks</div>
<div class="t" style="left:688px;top:275.18px;font-size:8.40px;transform:scale(0.3333);transform-origin:0 0;-webkit-text-stroke:0;color:#9a7878">21%</div>
<div class="t" style="left:690.7px;top:275.18px;width:90px;text-align:right;font-size:8.40px;transform:scale(0.3333);transform-origin:0 0;-webkit-text-stroke:0;color:#9a7878">100.67</div>
<div class="t" style="left:715.6px;top:275.18px;width:90px;text-align:right;font-size:8.40px;transform:scale(0.3333);transform-origin:0 0;-webkit-text-stroke:0;color:#9a7878">100.83</div>
<div class="a" style="left:577px;top:279.08px;width:177px;height:0.4px;background:#f6cccc"></div>
<div class="t" style="left:579px;top:280.15px;font-size:8.40px;transform:scale(0.3333);transform-origin:0 0;-webkit-text-stroke:0;color:#9a7878">KIT_PN1_2170B</div>
<div class="t" style="left:650px;top:280.15px;width:90px;text-align:right;font-size:8.40px;transform:scale(0.3333);transform-origin:0 0;-webkit-text-stroke:0;color:#9a7878">1 ks</div>
<div class="t" style="left:688px;top:280.15px;font-size:8.40px;transform:scale(0.3333);transform-origin:0 0;-webkit-text-stroke:0;color:#9a7878">21%</div>
<div class="t" style="left:690.7px;top:280.15px;width:90px;text-align:right;font-size:8.40px;transform:scale(0.3333);transform-origin:0 0;-webkit-text-stroke:0;color:#9a7878">100.67</div>
<div class="t" style="left:715.6px;top:280.15px;width:90px;text-align:right;font-size:8.40px;transform:scale(0.3333);transform-origin:0 0;-webkit-text-stroke:0;color:#9a7878">100.83</div>
<div class="a" style="left:577px;top:284.05px;width:177px;height:0.4px;background:#f6cccc"></div>
<div class="t" style="left:583px;top:285.12px;font-size:8.40px;transform:scale(0.3333);transform-origin:0 0;-webkit-text-stroke:0;color:#9a7878">Nástavec pro KIT_PN1 170 B</div>
<div class="t" style="left:650px;top:285.12px;width:90px;text-align:right;font-size:8.40px;transform:scale(0.3333);transform-origin:0 0;-webkit-text-stroke:0;color:#9a7878">1 ks</div>
<div class="t" style="left:688px;top:285.12px;font-size:8.40px;transform:scale(0.3333);transform-origin:0 0;-webkit-text-stroke:0;color:#9a7878">21%</div>
<div class="t" style="left:690.7px;top:285.12px;width:90px;text-align:right;font-size:8.40px;transform:scale(0.3333);transform-origin:0 0;-webkit-text-stroke:0;color:#9a7878">40.67</div>
<div class="t" style="left:715.6px;top:285.12px;width:90px;text-align:right;font-size:8.40px;transform:scale(0.3333);transform-origin:0 0;-webkit-text-stroke:0;color:#9a7878">40.83</div>
<div class="a" style="left:577px;top:289.02px;width:177px;height:0.4px;background:#f6cccc"></div>
<div class="t" style="left:583px;top:290.09px;font-size:8.40px;transform:scale(0.3333);transform-origin:0 0;-webkit-text-stroke:0;color:#9a7878">Ht PN1 vrtací sada</div>
<div class="t" style="left:650px;top:290.09px;width:90px;text-align:right;font-size:8.40px;transform:scale(0.3333);transform-origin:0 0;-webkit-text-stroke:0;color:#9a7878">100.00</div>
<div class="t" style="left:688px;top:290.09px;font-size:8.40px;transform:scale(0.3333);transform-origin:0 0;-webkit-text-stroke:0;color:#9a7878">21%</div>
<div class="t" style="left:690.7px;top:290.09px;width:90px;text-align:right;font-size:8.40px;transform:scale(0.3333);transform-origin:0 0;-webkit-text-stroke:0;color:#9a7878">0.00</div>
<div class="t" style="left:715.6px;top:290.09px;width:90px;text-align:right;font-size:8.40px;transform:scale(0.3333);transform-origin:0 0;-webkit-text-stroke:0;color:#9a7878">10.00</div>
<div class="a" style="left:577px;top:293.99px;width:177px;height:0.4px;background:#f6cccc"></div>
<div class="t" style="left:579px;top:295.06px;font-size:8.40px;transform:scale(0.3333);transform-origin:0 0;-webkit-text-stroke:0;color:#9a7878">KIT_PN2_2170B</div>
<div class="t" style="left:650px;top:295.06px;width:90px;text-align:right;font-size:8.40px;transform:scale(0.3333);transform-origin:0 0;-webkit-text-stroke:0;color:#9a7878">1 ks</div>
<div class="t" style="left:688px;top:295.06px;font-size:8.40px;transform:scale(0.3333);transform-origin:0 0;-webkit-text-stroke:0;color:#9a7878">21%</div>
<div class="t" style="left:690.7px;top:295.06px;width:90px;text-align:right;font-size:8.40px;transform:scale(0.3333);transform-origin:0 0;-webkit-text-stroke:0;color:#9a7878">100.00</div>
<div class="t" style="left:715.6px;top:295.06px;width:90px;text-align:right;font-size:8.40px;transform:scale(0.3333);transform-origin:0 0;-webkit-text-stroke:0;color:#9a7878">100.00</div>
<div class="a" style="left:577px;top:298.96px;width:177px;height:0.4px;background:#f6cccc"></div>
<div class="t" style="left:583px;top:300.03px;font-size:8.40px;transform:scale(0.3333);transform-origin:0 0;-webkit-text-stroke:0;color:#9a7878">Nástavec pro KIT_PN2 - 2170B</div>
<div class="t" style="left:650px;top:300.03px;width:90px;text-align:right;font-size:8.40px;transform:scale(0.3333);transform-origin:0 0;-webkit-text-stroke:0;color:#9a7878">1 ks</div>
<div class="t" style="left:688px;top:300.03px;font-size:8.40px;transform:scale(0.3333);transform-origin:0 0;-webkit-text-stroke:0;color:#9a7878">21%</div>
<div class="t" style="left:690.7px;top:300.03px;width:90px;text-align:right;font-size:8.40px;transform:scale(0.3333);transform-origin:0 0;-webkit-text-stroke:0;color:#9a7878">40.00</div>
<div class="t" style="left:715.6px;top:300.03px;width:90px;text-align:right;font-size:8.40px;transform:scale(0.3333);transform-origin:0 0;-webkit-text-stroke:0;color:#9a7878">40.00</div>
<div class="a" style="left:577px;top:303.93px;width:177px;height:0.4px;background:#f6cccc"></div>
<div class="t" style="left:583px;top:305.00px;font-size:8.40px;transform:scale(0.3333);transform-origin:0 0;-webkit-text-stroke:0;color:#9a7878">Ht PN2 vrtací sada</div>
<div class="t" style="left:650px;top:305.00px;width:90px;text-align:right;font-size:8.40px;transform:scale(0.3333);transform-origin:0 0;-webkit-text-stroke:0;color:#9a7878">170.00</div>
<div class="t" style="left:688px;top:305.00px;font-size:8.40px;transform:scale(0.3333);transform-origin:0 0;-webkit-text-stroke:0;color:#9a7878">21%</div>
<div class="t" style="left:690.7px;top:305.00px;width:90px;text-align:right;font-size:8.40px;transform:scale(0.3333);transform-origin:0 0;-webkit-text-stroke:0;color:#9a7878">0.00</div>
<div class="t" style="left:715.6px;top:305.00px;width:90px;text-align:right;font-size:8.40px;transform:scale(0.3333);transform-origin:0 0;-webkit-text-stroke:0;color:#9a7878">0.00</div>
<div class="a" style="left:577px;top:308.9px;width:177px;height:0.4px;background:#f6cccc"></div>
<div class="t" style="left:579px;top:309.97px;font-size:8.40px;transform:scale(0.3333);transform-origin:0 0;-webkit-text-stroke:0;color:#9a7878">Instalace a ruční</div>
<div class="t" style="left:650px;top:309.97px;width:90px;text-align:right;font-size:8.40px;transform:scale(0.3333);transform-origin:0 0;-webkit-text-stroke:0;color:#9a7878">1 ks</div>
<div class="t" style="left:688px;top:309.97px;font-size:8.40px;transform:scale(0.3333);transform-origin:0 0;-webkit-text-stroke:0;color:#9a7878">21%</div>
<div class="t" style="left:690.7px;top:309.97px;width:90px;text-align:right;font-size:8.40px;transform:scale(0.3333);transform-origin:0 0;-webkit-text-stroke:0;color:#9a7878">0.00</div>
<div class="t" style="left:715.6px;top:309.97px;width:90px;text-align:right;font-size:8.40px;transform:scale(0.3333);transform-origin:0 0;-webkit-text-stroke:0;color:#9a7878">0.00</div>
<div class="a" style="left:577px;top:313.87px;width:177px;height:0.4px;background:#f6cccc"></div>
<div class="t" style="left:579px;top:314.94px;font-size:8.40px;transform:scale(0.3333);transform-origin:0 0;-webkit-text-stroke:0;color:#9a7878">poplatek za zaslání zboží na dobírku</div>
<div class="t" style="left:650px;top:314.94px;width:90px;text-align:right;font-size:8.40px;transform:scale(0.3333);transform-origin:0 0;-webkit-text-stroke:0;color:#9a7878">1</div>
<div class="t" style="left:688px;top:314.94px;font-size:8.40px;transform:scale(0.3333);transform-origin:0 0;-webkit-text-stroke:0;color:#9a7878">21%</div>
<div class="t" style="left:690.7px;top:314.94px;width:90px;text-align:right;font-size:8.40px;transform:scale(0.3333);transform-origin:0 0;-webkit-text-stroke:0;color:#9a7878">30.00</div>
<div class="t" style="left:715.6px;top:314.94px;width:90px;text-align:right;font-size:8.40px;transform:scale(0.3333);transform-origin:0 0;-webkit-text-stroke:0;color:#9a7878">30.00</div>
<div class="a" style="left:577px;top:318.84px;width:177px;height:0.4px;background:#f6cccc"></div>
<div class="t" style="left:579px;top:319.91px;font-size:8.40px;transform:scale(0.3333);transform-origin:0 0;-webkit-text-stroke:0;color:#9a7878">poplatek za zásilkovou službu</div>
<div class="t" style="left:650px;top:319.91px;width:90px;text-align:right;font-size:8.40px;transform:scale(0.3333);transform-origin:0 0;-webkit-text-stroke:0;color:#9a7878">1</div>
<div class="t" style="left:688px;top:319.91px;font-size:8.40px;transform:scale(0.3333);transform-origin:0 0;-webkit-text-stroke:0;color:#9a7878">21%</div>
<div class="t" style="left:690.7px;top:319.91px;width:90px;text-align:right;font-size:8.40px;transform:scale(0.3333);transform-origin:0 0;-webkit-text-stroke:0;color:#9a7878">0.00</div>
<div class="t" style="left:715.6px;top:319.91px;width:90px;text-align:right;font-size:8.40px;transform:scale(0.3333);transform-origin:0 0;-webkit-text-stroke:0;color:#9a7878">0.00</div>
<div class="t" style="left:680px;top:361.50px;width:120px;text-align:right;font-size:9.00px;transform:scale(0.3333);transform-origin:0 0;-webkit-text-stroke:0;color:#9a7878">Základ daně (21%)</div>
<div class="t" style="left:714.8px;top:361.50px;width:90px;text-align:right;font-size:9.00px;transform:scale(0.3333);transform-origin:0 0;-webkit-text-stroke:0;color:#9a7878">725.00</div>
<div class="t" style="left:680px;top:366.40px;width:120px;text-align:right;font-size:9.00px;transform:scale(0.3333);transform-origin:0 0;-webkit-text-stroke:0;color:#9a7878">DPH (21%)</div>
<div class="t" style="left:714.8px;top:366.40px;width:90px;text-align:right;font-size:9.00px;transform:scale(0.3333);transform-origin:0 0;-webkit-text-stroke:0;color:#9a7878">152.25</div>
<div class="t" style="left:680px;top:371.70px;width:120px;text-align:right;font-size:9.00px;transform:scale(0.3333);transform-origin:0 0;-webkit-text-stroke:0;color:#9a7878">Zaokrouhlení (21%)</div>
<div class="t" style="left:714.8px;top:371.70px;width:90px;text-align:right;font-size:9.00px;transform:scale(0.3333);transform-origin:0 0;-webkit-text-stroke:0;color:#9a7878">0.00</div>
<div class="a" style="left:685.6px;top:376px;width:66.9px;height:6.5px;border:0.6px solid #d4b2b2;border-right:none"></div>
<div class="t" style="left:680px;top:377.90px;width:120px;text-align:right;font-size:9.00px;transform:scale(0.3333);transform-origin:0 0;-webkit-text-stroke:0;color:#4a2a2a;font-weight:bold">Celkem k úhradě</div>
<div class="t" style="left:714.6px;top:377.90px;width:93px;text-align:right;font-size:9.00px;transform:scale(0.3333);transform-origin:0 0;-webkit-text-stroke:0;color:#4a2a2a;font-weight:bold">877.00Kč</div>
<svg class="a" style="left:692px;top:384px" width="60" height="34" viewBox="0 0 60 34"><g transform="rotate(-6 24 8)"><text x="2.6" y="9.6" font-family="Liberation Sans" font-weight="bold" font-size="7" fill="#3a2020" stroke="#3a2020" stroke-width="0.1" textLength="45" lengthAdjust="spacingAndGlyphs">FIEDLER-MÁGR</text><path d="M2.4 11 H48" stroke="#2a1414" stroke-width="1.1"/><text x="3" y="15" font-family="Liberation Sans" font-weight="bold" font-size="3.2" fill="#3a2020" textLength="44" lengthAdjust="spacingAndGlyphs">Šebrováčkova 18, 370 01 Č. Budějovice</text><path d="M10 16.4 H44" stroke="#3a2020" stroke-width="0.7"/><text x="2" y="19.6" font-family="Liberation Sans" font-weight="bold" font-size="3.2" fill="#3a2020" textLength="44" lengthAdjust="spacingAndGlyphs">IČO 11143450  DIČ CZ5708012694</text><text x="2" y="24" font-family="Liberation Sans" font-weight="bold" font-size="3.2" fill="#3a2020" textLength="40" lengthAdjust="spacingAndGlyphs">Info  386350314   www.fiedlermagr</text></g><path d="M36 22 C32 24 33 30 37 29 C39 28 40 25 41 22 C42 26 41 29 43 28 C45 27 45 24 46 25 C46 28 48 28 49 26 C51 21 53 15 55 11 C56 9 54 10 53 13 C51 19 51 26 54 29 C55 30 56 29 57 28" stroke="#201010" stroke-width="0.85" fill="none"/><path d="M39 23 L41 19 M44 25 C45 23 47 23 46 25" stroke="#201010" stroke-width="0.7" fill="none"/></svg>
<div class="a" style="left:700px;top:417.4px;width:52px;height:0.4px;background:#e4bcbc"></div>
<div class="t" style="left:711.8px;top:418.27px;font-size:7.98px;transform:scale(0.3333);transform-origin:0 0;-webkit-text-stroke:0;color:#9a7878">Ing. Jindřich Fiedler</div>
<div class="a" style="left:577px;top:429.2px;width:177px;height:0.5px;background:#dcb4b4"></div>
<div class="t" style="left:577px;top:430.82px;font-size:8.25px;transform:scale(0.3333);transform-origin:0 0;-webkit-text-stroke:0;color:#9a7878">Fiedler-Mágr je plátcem DPH, zapsán v obchodním rejstříku vedeném Krajským soudem v Českých Budějovicích, oddíl A, vložka 4</div>
<div class="t" style="left:577px;top:434.73px;font-size:8.25px;transform:scale(0.3333);transform-origin:0 0;-webkit-text-stroke:0;color:#9a7878">Bankovní spojení: 2002771047/6000</div>
<div class="t" style="left:577px;top:438.62px;font-size:8.25px;transform:scale(0.3333);transform-origin:0 0;-webkit-text-stroke:0;color:#9a7878">Fakturu vystavil: Ing. Jindřich Fiedler, tel.: 386 350 314</div>
</div>
<div class="a" style="left:782.2px;top:132.4px;width:1px;height:325px;background:#fff"></div>
<div class="a" style="left:783.4px;top:119.8px;width:11px;height:337.5px;background:#f0f0f0"></div>
<div class="a" style="left:784.5px;top:130.8px;width:9.6px;height:284.2px;background:#cdcdcd"></div>
<svg class="a" style="left:786.4px;top:123.8px" width="6" height="3.6" viewBox="0 0 6 3.6"><path d="M0.5 3.1 L3 0.6 L5.5 3.1" stroke="#606060" stroke-width="0.9" fill="none"/></svg>
<svg class="a" style="left:786.4px;top:449.4px" width="6" height="3.6" viewBox="0 0 6 3.6"><path d="M0.5 0.5 L3 3 L5.5 0.5" stroke="#606060" stroke-width="0.9" fill="none"/></svg>
<div class="a" style="left:6px;top:456.2px;width:777px;height:1px;background:#dcdcdc"></div>
<div class="a" style="left:5px;top:457.4px;width:790px;height:1.2px;background:#b4cbe6"></div>
<div class="a" style="left:5px;top:458.6px;width:790px;height:10.4px;background:#f0f0f0"></div>
<div class="a" style="left:62px;top:459px;width:1px;height:10px;background:#c8c8c8;box-shadow:1px 0 0 #fff"></div>
<div class="a" style="left:179px;top:459px;width:1px;height:10px;background:#c8c8c8;box-shadow:1px 0 0 #fff"></div>
<div class="a" style="left:199px;top:459px;width:1px;height:10px;background:#c8c8c8;box-shadow:1px 0 0 #fff"></div>
<div class="a" style="left:238px;top:459px;width:1px;height:10px;background:#c8c8c8;box-shadow:1px 0 0 #fff"></div>
<div class="t" style="left:6.3px;top:461.05px;font-size:6.3px;color:#333">OfwkWrapper</div>
<div class="t" style="left:64.5px;top:461.05px;font-size:6.3px;color:#333">Ofwk2(U)</div>
<div class="t" style="left:202px;top:461.07px;font-size:6.25px;color:#333">16.09.2020</div>
<svg class="a" style="left:786px;top:459px" width="9" height="9" viewBox="0 0 9 9"><path d="M8 2 L2 8 M8 4.5 L4.5 8 M8 7 L7 8" stroke="#b8b8b8" stroke-width="0.9"/></svg>
</body></html>
